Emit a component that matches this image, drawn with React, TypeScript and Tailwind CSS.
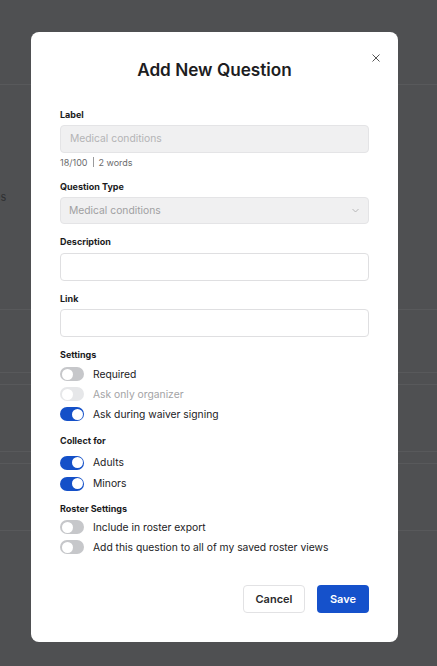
import React from 'react';

const font = { fontFamily: 'Inter, "Noto Sans", sans-serif' };

function Toggle({ on, disabled }: { on?: boolean; disabled?: boolean }) {
  const track = on ? 'bg-[#1450c8]' : disabled ? 'bg-[#e6e7e9]' : 'bg-[#c6c7ca]';
  return (
    <span className={`flex h-[14px] w-[24px] shrink-0 items-center rounded-full px-[1.5px] ${track} ${on ? 'justify-end' : 'justify-start'}`}>
      <span className="h-[11px] w-[11px] rounded-full bg-white" />
    </span>
  );
}

function ToggleRow({ label, on, disabled, tall }: { label: string; on?: boolean; disabled?: boolean; tall?: boolean }) {
  return (
    <div className={`flex items-center gap-[9px] ${tall ? 'h-[21px]' : 'h-[20px]'}`}>
      <Toggle on={on} disabled={disabled} />
      <span className={`text-[10.3px] leading-none ${disabled ? 'text-[#a3a3a5]' : 'text-[#222224]'}`}>{label}</span>
    </div>
  );
}

function FieldLabel({ children }: { children: React.ReactNode }) {
  return <div className="h-[12px] text-[9px] font-bold leading-[12px] text-[#1a1a1c]">{children}</div>;
}

export default function App() {
  return (
    <div className="relative h-[666px] w-[437px] overflow-hidden bg-[#4f5052]" style={font}>
      {/* page behind the overlay */}
      <div className="flex flex-col">
        <div className="h-[85px] border-b border-[#58595b]" />
        <div className="flex h-[225px] items-start border-b border-[#58595b] pt-[104px] text-[11px] text-[#2f3032]">
          <span className="-ml-[6px]">es</span>
        </div>
        <div className="h-[63px] border-b border-[#58595b]" />
        <div className="h-[12px] border-b border-[#58595b]" />
        <div className="h-[67px] border-b border-[#58595b]" />
        <div className="h-[12px] border-b border-[#58595b]" />
        <div className="h-[67px] border-b border-[#58595b]" />
      </div>

      {/* modal */}
      <div className="absolute left-[31px] top-[32px] w-[367px] rounded-[8px] bg-white px-[29px] pb-[29px] pt-[26px]">
        <button className="absolute right-[18px] top-[22px] text-[#555]">
          <svg width="8" height="8" viewBox="0 0 8 8" fill="none" stroke="currentColor" strokeWidth="1">
            <path d="M0.5 0.5l7 7M7.5 0.5l-7 7" />
          </svg>
        </button>
        <h2 className="h-[24px] text-center text-[17.2px] font-semibold leading-[24px] text-[#1d1d1f]">Add New Question</h2>

        <div className="mt-[27px]">
          <FieldLabel>Label</FieldLabel>
          <div className="mt-[4px] flex h-[28px] items-center rounded-[4px] border border-[#e4e4e6] bg-[#f0f0f1] px-[9px] text-[10.3px] text-[#b4b4b6]">
            Medical conditions
          </div>
          <div className="mt-[3px] flex h-[12px] items-center text-[9px] leading-none text-[#6b6b6d]">
            <span>18/100</span>
            <span className="mx-[5px] h-[10px] w-px bg-[#9a9a9c]" />
            <span>2 words</span>
          </div>
        </div>

        <div className="mt-[13px]">
          <FieldLabel>Question Type</FieldLabel>
          <div className="mt-[4px] flex h-[27px] items-center justify-between rounded-[4px] border border-[#e4e4e6] bg-[#f0f0f1] pl-[8px] pr-[9px] text-[10.3px] text-[#a0a0a2]">
            <span>Medical conditions</span>
            <svg width="7" height="5" viewBox="0 0 7 5" fill="none" stroke="#b0b0b2" strokeWidth="0.9">
              <path d="M0.5 1l3 3 3-3" />
            </svg>
          </div>
        </div>

        <div className="mt-[12px]">
          <FieldLabel>Description</FieldLabel>
          <div className="mt-[5px] h-[28px] rounded-[4px] border border-[#dfdfe1] bg-white" />
        </div>

        <div className="mt-[12px]">
          <FieldLabel>Link</FieldLabel>
          <div className="mt-[4px] h-[28px] rounded-[4px] border border-[#dfdfe1] bg-white" />
        </div>

        <div className="mt-[12px]">
          <FieldLabel>Settings</FieldLabel>
          <div className="mt-[3px] flex flex-col">
            <ToggleRow label="Required" />
            <ToggleRow label="Ask only organizer" disabled />
            <ToggleRow label="Ask during waiver signing" on />
          </div>
        </div>

        <div className="mt-[11px]">
          <FieldLabel>Collect for</FieldLabel>
          <div className="mt-[5px] flex flex-col">
            <ToggleRow label="Adults" on tall />
            <ToggleRow label="Minors" on tall />
          </div>
        </div>

        <div className="mt-[9px]">
          <FieldLabel>Roster Settings</FieldLabel>
          <div className="mt-[2px] flex flex-col">
            <ToggleRow label="Include in roster export" />
            <ToggleRow label="Add this question to all of my saved roster views" />
          </div>
        </div>

        <div className="mt-[28px] flex justify-end gap-[12px]">
          <button className="h-[28px] w-[62px] rounded-[4px] border border-[#e2e2e4] bg-white text-[11px] font-semibold text-[#2a2a2c]">
            Cancel
          </button>
          <button className="h-[28px] w-[52px] rounded-[4px] bg-[#1551cb] text-[11px] font-semibold text-white">
            Save
          </button>
        </div>
      </div>
    </div>
  );
}
